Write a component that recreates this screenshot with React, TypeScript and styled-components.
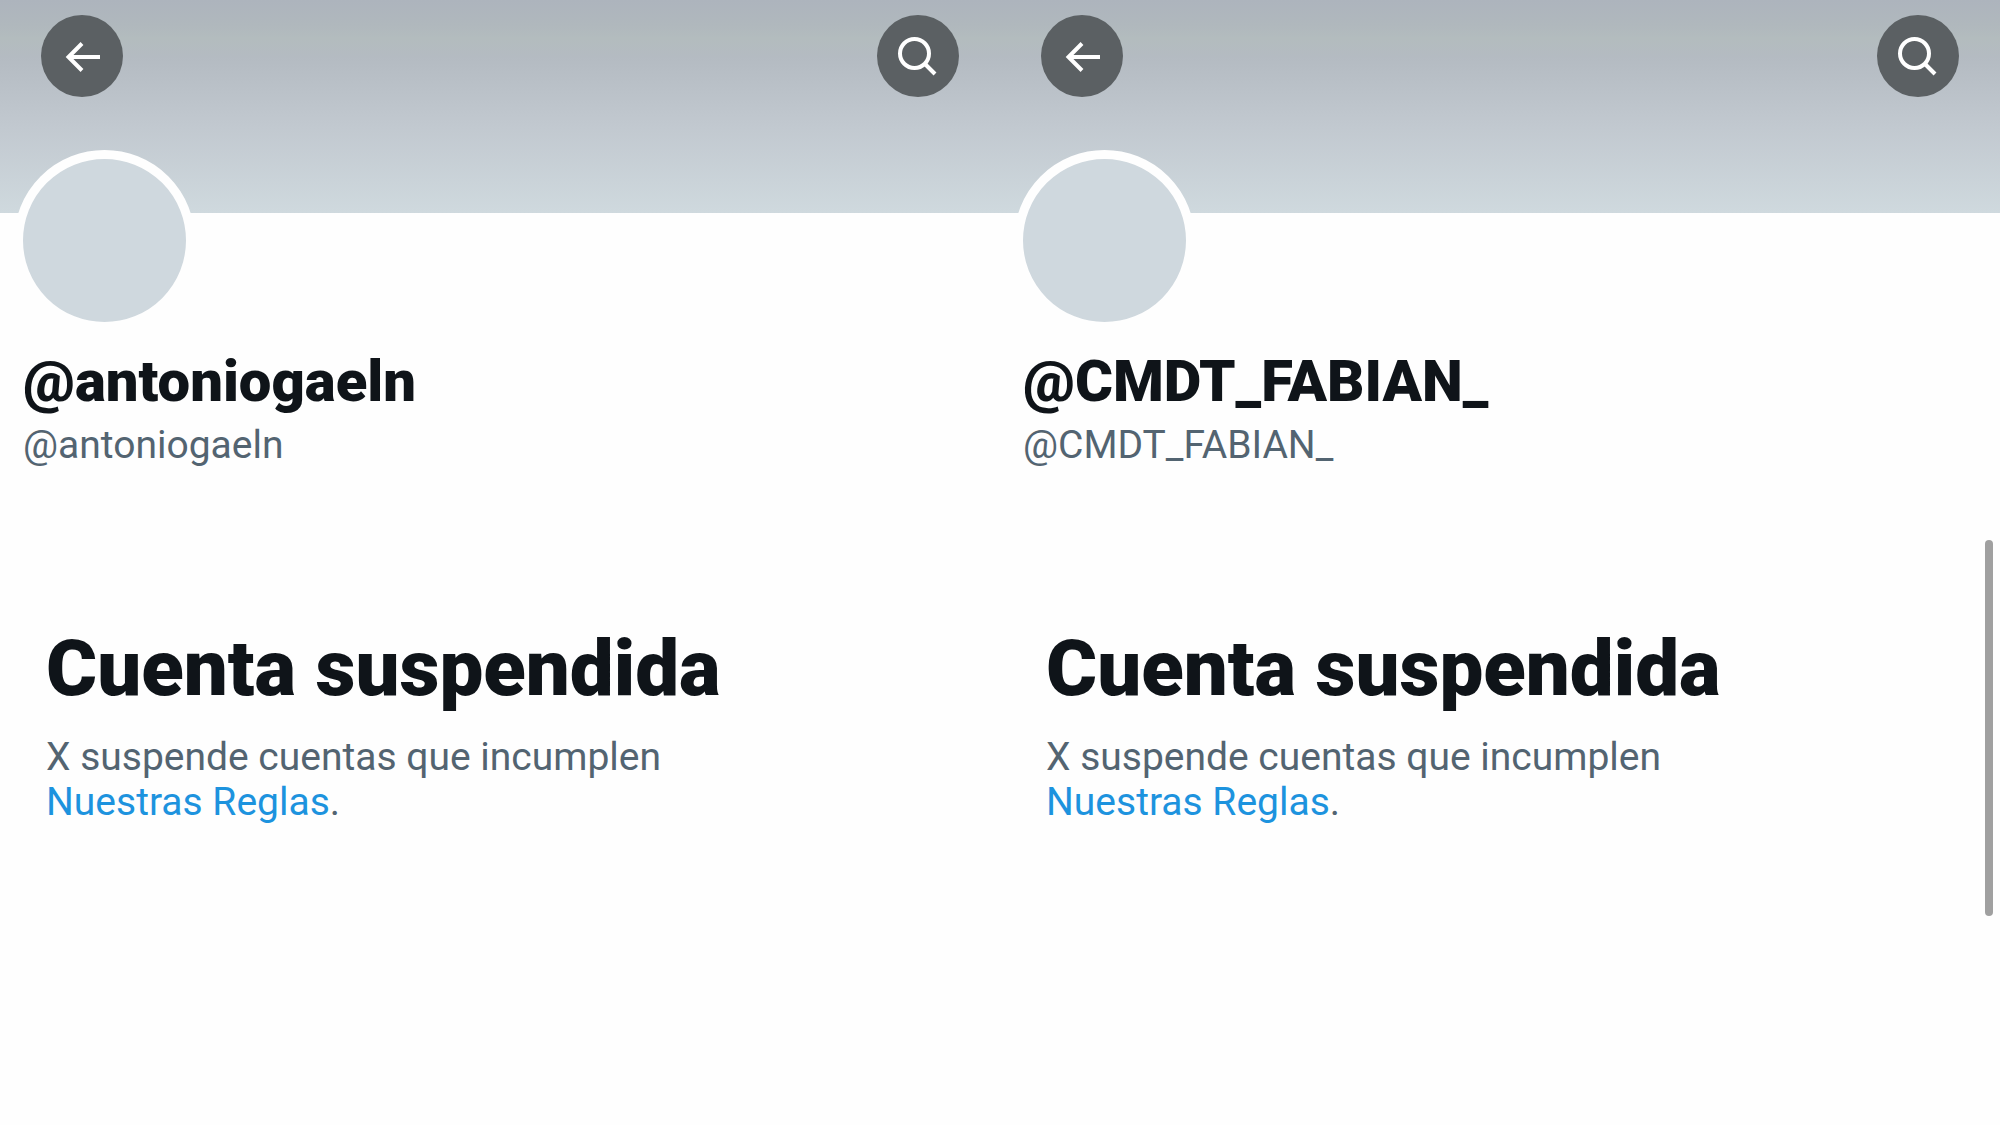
import React from "react";
import styled, { createGlobalStyle } from "styled-components";

const GlobalStyle = createGlobalStyle`
  *, *::before, *::after { box-sizing: border-box; }
  body {
    margin: 0;
    background: #fefefe;
    color: #0f1419;
    font-family: Roboto, "Liberation Sans", sans-serif;
  }
  h1, h2, p { margin: 0; }
`;

const Page = styled.main`
  position: relative;
  display: grid;
  grid-template-columns: repeat(2, minmax(0, 1fr));
  min-height: 100vh;
`;

const Profile = styled.section`
  display: flex;
  flex-direction: column;
`;

const Banner = styled.header`
  display: flex;
  justify-content: space-between;
  align-items: flex-start;
  height: 213px;
  padding: 15px 41px;
  background: linear-gradient(
    #adb4bd 0%,
    #b0b8bd 12%,
    #b3bcbe 18%,
    #b4bbc2 27%,
    #c1c8cf 58%,
    #cfd9de 100%
  );
`;

const RoundButton = styled.button`
  display: grid;
  place-items: center;
  width: 82px;
  height: 82px;
  padding: 0;
  border: 0;
  border-radius: 50%;
  background: #5b6063;
  color: #fff;
  cursor: pointer;
`;

const Icon = styled.svg`
  width: 82px;
  height: 82px;
  fill: none;
  stroke: currentColor;
  stroke-width: 4;
`;

const Avatar = styled.div`
  width: 181px;
  height: 181px;
  margin: -63px 0 0 14px;
  border: 9px solid #fefefe;
  border-radius: 50%;
  background: #cfd8de;
`;

const Identity = styled.div`
  padding: 18px 23px 0;
`;

const Name = styled.h1`
  font-size: 58px;
  line-height: 64px;
  font-weight: 900;
`;

const Handle = styled.p`
  font-size: 39px;
  line-height: 64px;
  color: #536471;
`;

const Notice = styled.div`
  display: flex;
  flex-direction: column;
  gap: 22px;
  padding: 148px 46px 0;
`;

const NoticeTitle = styled.h2`
  font-size: 78px;
  line-height: 88px;
  font-weight: 900;
`;

const NoticeText = styled.p`
  max-width: 720px;
  font-size: 39px;
  line-height: 45px;
  color: #536471;
`;

const RulesLink = styled.a`
  display: inline-block;
  color: #1d93de;
  text-decoration: none;
`;

const ScrollThumb = styled.div`
  position: absolute;
  top: 48%;
  right: 7px;
  width: 8px;
  height: 376px;
  border-radius: 4px;
  background: #a0a0a0;
`;

function BackIcon() {
  return (
    <Icon viewBox="0 0 82 82" aria-hidden="true">
      <path d="M59 42H28M41 28.500L27.500 42L41 55.500" />
    </Icon>
  );
}

function SearchIcon() {
  return (
    <Icon viewBox="0 0 82 82" aria-hidden="true">
      <circle cx="37.500" cy="38.500" r="14.500" />
      <path d="M48 49L58 59" />
    </Icon>
  );
}

function SuspendedProfile({ handle }: { handle: string }) {
  return (
    <Profile>
      <Banner>
        <RoundButton type="button" aria-label="Atrás">
          <BackIcon />
        </RoundButton>
        <RoundButton type="button" aria-label="Buscar">
          <SearchIcon />
        </RoundButton>
      </Banner>
      <Avatar />
      <Identity>
        <Name>{handle}</Name>
        <Handle>{handle}</Handle>
      </Identity>
      <Notice>
        <NoticeTitle>Cuenta suspendida</NoticeTitle>
        <NoticeText>
          X suspende cuentas que incumplen{" "}
          <RulesLink href="#reglas">Nuestras Reglas</RulesLink>.
        </NoticeText>
      </Notice>
    </Profile>
  );
}

export default function App() {
  return (
    <>
      <GlobalStyle />
      <Page>
        <SuspendedProfile handle="@antoniogaeln" />
        <SuspendedProfile handle="@CMDT_FABIAN_" />
        <ScrollThumb />
      </Page>
    </>
  );
}
